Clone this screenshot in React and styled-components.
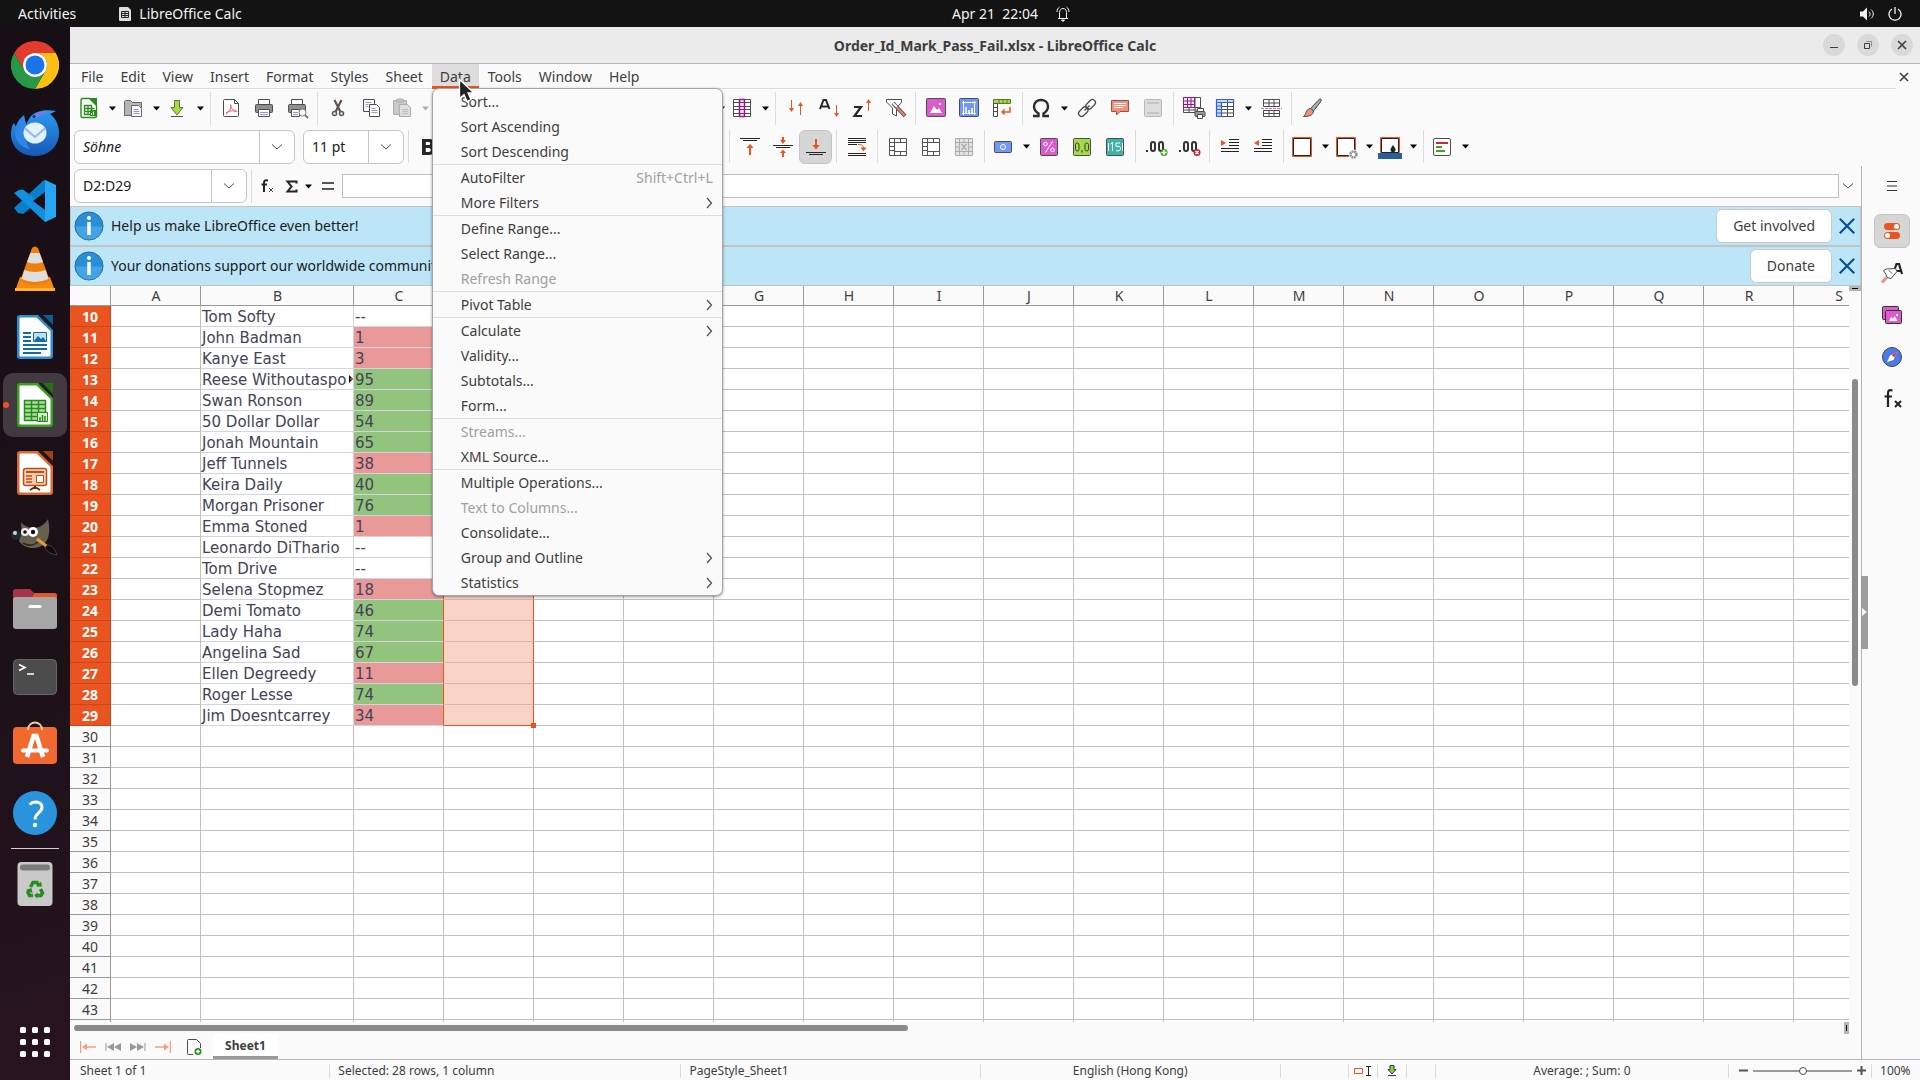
import React from "react";
import styled, { createGlobalStyle, css } from "styled-components";
import {
  AlignCenter,
  AlignLeft,
  AlignRight,
  Eraser,
  Highlighter,
  Italic,
  Paintbrush,
  Redo2,
  Rows3,
  Search,
  SpellCheck,
  Type,
  Underline,
  Undo2
} from "lucide-react";

const color = {
  panel: "#fafafa",
  text: "#3d3d3d",
  muted: "#a0a0a0",
  line: "#c0c0c0",
  softLine: "#dcdcdc",
  headLine: "#999999",
  orange: "#e95420",
  info: "#bce5f7",
  ink: "#4d4d4d"
};

const GlobalStyle = createGlobalStyle`
  * {
    box-sizing: border-box;
  }

  body {
    margin: 0;
    overflow: hidden;
    background: #1a0f16;
    color: ${color.text};
    font-family: "Noto Sans", "Open Sans", sans-serif;
    font-size: 14px;
    line-height: 20px;
  }

  button,
  input {
    margin: 0;
    padding: 0;
    border: 0;
    background: none;
    color: inherit;
    font: inherit;
  }

  svg {
    display: block;
    flex: none;
  }
`;

/* ---------- shell ---------- */

const Screen = styled.div`
  display: flex;
  flex-direction: column;
  height: 100vh;
`;

const TopBar = styled.header`
  display: grid;
  grid-template-columns: 1fr auto 1fr;
  flex: none;
  align-items: center;
  height: 27px;
  padding: 0 18px;
  background: #131313;
  color: #f2f2f2;
`;

const TopGroup = styled.div`
  display: flex;
  align-items: center;
  justify-content: ${props => props.$align || "flex-start"};
  gap: ${props => props.$gap}px;
  white-space: pre;
`;

const Clock = styled(TopGroup)`
  padding-left: 102px;
`;

const AppName = styled.div`
  display: flex;
  align-items: center;
  gap: 8px;
`;

const Body = styled.div`
  display: flex;
  flex: 1;
  min-height: 0;
`;

const Dock = styled.nav`
  display: flex;
  flex: none;
  flex-direction: column;
  align-items: center;
  gap: 4px;
  width: 70px;
  padding: 6px 0;
  background: linear-gradient(160deg, #180e15, #1d1118 60%, #28141f);
`;

const DockButton = styled.button`
  position: relative;
  display: flex;
  flex: none;
  align-items: center;
  justify-content: center;
  width: 64px;
  height: 64px;
  border-radius: 10px;
  background: ${props => (props.$active ? "#423a40" : "transparent")};

  ${props =>
    props.$active &&
    css`
      &::before {
        content: "";
        position: absolute;
        left: 0;
        width: 6px;
        height: 6px;
        border-radius: 3px;
        background: ${color.orange};
      }
    `}
`;

const DockRule = styled.hr`
  width: 48px;
  height: 1px;
  margin: -1px 0;
  border: 0;
  background: #d4cfd2;
`;

const DockSpacer = styled.div`
  flex: 1;
`;

const Window = styled.main`
  display: flex;
  flex: 1;
  flex-direction: column;
  min-width: 0;
  background: ${color.panel};
`;

const TitleBar = styled.div`
  display: grid;
  grid-template-columns: 1fr auto 1fr;
  flex: none;
  align-items: center;
  height: 37px;
  padding: 0 7px;
  border-bottom: 1px solid #b8b8b8;
  background: #ebebeb;
`;

const Title = styled.h1`
  grid-column: 2;
  margin: 0;
  padding-top: 1px;
  font-size: 14px;
  font-weight: 700;
`;

const WindowControls = styled.div`
  display: flex;
  justify-content: flex-end;
  gap: 12px;
`;

const RoundButton = styled.button`
  display: flex;
  align-items: center;
  justify-content: center;
  width: 22px;
  height: 22px;
  border-radius: 11px;
  background: #d9d9d9;
`;

/* ---------- menu bar ---------- */

const MenuBar = styled.div`
  display: flex;
  flex: none;
  height: 25px;
`;

const MenuList = styled.div`
  display: flex;
  flex: 1;
  gap: 1px;
  padding-left: 3px;
  border-bottom: 1px solid ${color.softLine};
`;

const MenuSlot = styled.div`
  position: relative;
`;

const MenuTitle = styled.button`
  height: 25px;
  padding: 0 8px;
  line-height: 25px;
  ${props =>
    props.$open &&
    css`
      background: #dcdcdc;
      box-shadow: inset 0 -3px ${color.orange};
    `}
`;

const CloseDocument = styled.button`
  display: flex;
  align-items: center;
  justify-content: center;
  width: 24px;
  padding-right: 8px;
`;

const Popup = styled.div`
  position: absolute;
  z-index: 10;
  top: 24px;
  left: 0;
  width: 291px;
  border: 1px solid #a6a6a6;
  border-radius: 7px;
  background: ${color.panel};
  box-shadow: 0 1px 3px rgba(0, 0, 0, 0.4);
`;

const MenuGroup = styled.div`
  & + & {
    border-top: 1px solid ${color.softLine};
  }
`;

const MenuEntry = styled.button`
  display: flex;
  align-items: center;
  justify-content: space-between;
  width: 100%;
  height: 25px;
  padding: 0 9px 0 28px;
  color: ${props => (props.disabled ? color.muted : color.text)};
`;

const Shortcut = styled.span`
  color: ${color.muted};
`;

const Pointer = styled.svg`
  position: absolute;
  z-index: 20;
  top: 14px;
  left: 26px;
`;

/* ---------- toolbars ---------- */

const Toolbar = styled.div`
  display: flex;
  flex: none;
  align-items: center;
  height: ${props => props.$height}px;
  padding: 0 4px;
`;

const ToolButton = styled.button`
  display: flex;
  flex: none;
  align-items: center;
  justify-content: flex-start;
  width: 33px;
  height: 34px;
  padding-left: ${props => (props.$dropdown ? 2 : 4)}px;
  border: 1px solid ${props => (props.$pressed ? "#c4c4c4" : "transparent")};
  border-radius: 6px;
  background: ${props => (props.$pressed ? "#d6d6d6" : "transparent")};
`;

const CaretButton = styled.button`
  display: flex;
  flex: none;
  align-items: center;
  justify-content: center;
  width: 11px;
  height: 34px;
`;

const Rule = styled.span`
  flex: none;
  width: 1px;
  height: 33px;
  margin: 0 3px 0 4px;
  background: ${color.softLine};
`;

const Combo = styled.div`
  display: flex;
  flex: none;
  width: ${props => props.$width}px;
  height: 34px;
  margin-right: ${props => props.$after || 0}px;
  border: 1px solid #c6c6c6;
  border-radius: 6px;
  background: #ffffff;
  color: #1a1a1a;

  input {
    flex: 1;
    min-width: 0;
    padding-left: 8px;
    font-style: ${props => (props.$italic ? "italic" : "normal")};
    outline: none;
  }

  button {
    display: flex;
    align-items: center;
    justify-content: center;
    width: 35px;
    border-left: 1px solid #c6c6c6;
  }
`;

const FormulaButton = styled.button`
  display: flex;
  flex: none;
  align-items: center;
  justify-content: center;
  width: ${props => props.$width || 24}px;
  height: 24px;
`;

const FormulaInput = styled.input`
  flex: 1;
  min-width: 0;
  height: 24px;
  border: 1px solid ${color.line};
  background: #ffffff;
`;

/* ---------- work area ---------- */

const Workspace = styled.div`
  display: flex;
  flex: 1;
  min-height: 0;
`;

const Document = styled.section`
  display: flex;
  flex: 1;
  flex-direction: column;
  min-width: 0;
`;

const InfoBar = styled.div`
  display: flex;
  flex: none;
  align-items: center;
  height: 40px;
  padding-left: 3px;
  border: 1px solid #c3c3c3;
  background: ${color.info};
  color: #1a1a1a;
`;

const InfoText = styled.span`
  flex: 1;
  padding-left: 7px;
`;

const InfoButton = styled.button`
  height: 34px;
  padding: 0 16px;
  border: 1px solid #c9c9c9;
  border-radius: 6px;
  background: #ffffff;
  color: ${color.text};
`;

const InfoClose = styled.button`
  display: flex;
  align-items: center;
  justify-content: center;
  width: 28px;
  height: 34px;
  padding-left: 2px;
`;

const GridArea = styled.div`
  display: flex;
  flex: 1;
  min-height: 0;
`;

const SheetView = styled.div`
  flex: 1;
  min-width: 0;
  overflow: hidden;
  background: #ffffff;
`;

const Sheet = styled.table`
  width: 1px;
  table-layout: fixed;
  border-spacing: 0;
`;

const HeadCell = styled.th`
  height: ${props => (props.$top ? 20 : 21)}px;
  padding: 0 0 0 ${props => (props.$top ? 1 : 0)}px;
  border-right: 1px solid ${props => (props.$selected ? "#c9481b" : color.headLine)};
  border-bottom: 1px solid ${props => (props.$selected ? "#c9481b" : color.headLine)};
  background: ${props => (props.$selected ? color.orange : color.panel)};
  color: ${props => (props.$selected ? "#ffffff" : color.text)};
  font-weight: ${props => (props.$selected ? 700 : 400)};
  line-height: 19px;
  text-align: center;
`;

const fills = { fail: "#ea9999", pass: "#93c47d" };

const Cell = styled.td`
  position: relative;
  height: 21px;
  padding: 2px 0 0 1px;
  border-right: 1px solid ${props => (props.$styled ? "#d3d3e1" : color.line)};
  border-bottom: 1px solid ${props => (props.$styled ? "#d3d3e1" : color.line)};
  background: ${props => fills[props.$fill] || "transparent"};
  color: #434356;
  font-family: "DejaVu Sans", sans-serif;
  font-size: 15px;
  line-height: 18px;
  white-space: nowrap;

  ${props =>
    props.$beforeSelection &&
    css`
      border-right-color: ${color.orange};
    `}

  ${props =>
    props.$selected &&
    css`
      border-right-color: ${color.orange};
      border-bottom-color: ${props.$last ? color.orange : "#dbb4ac"};
      background: #fad3c7;
    `}
`;

const FillHandle = styled.span`
  position: absolute;
  right: -3px;
  bottom: -3px;
  z-index: 1;
  width: 5px;
  height: 5px;
  background: ${color.orange};
`;

const OverflowMark = styled.svg`
  position: absolute;
  top: 6px;
  right: 0;
`;

const VerticalTrack = styled.div`
  display: flex;
  flex: none;
  flex-direction: column;
  align-items: center;
  width: 12px;
`;

const SplitHandle = styled.div`
  display: flex;
  align-items: center;
  justify-content: center;
  flex: none;
  width: ${props => (props.$vertical ? 5 : 12)}px;
  height: ${props => (props.$vertical ? 12 : 5)}px;
  background: #b5b5b5;

  &::before {
    content: "";
    width: ${props => (props.$vertical ? 1 : 6)}px;
    height: ${props => (props.$vertical ? 6 : 1)}px;
    background: #000000;
  }
`;

const VerticalRun = styled.div`
  display: grid;
  grid-template-rows: 88fr 307fr 336fr;
  flex: 1;
`;

const Thumb = styled.div`
  grid-area: 2 / 1;
  width: 6px;
  border-radius: 3px;
  background: #8a8a8a;
`;

const HorizontalTrack = styled.div`
  display: flex;
  flex: none;
  align-items: center;
  justify-content: space-between;
  height: 12px;
  padding: 0 12px 0 4px;
`;

const HorizontalThumb = styled.div`
  width: 47%;
  height: 6px;
  border-radius: 3px;
  background: #8a8a8a;
`;

const TabBar = styled.div`
  display: flex;
  flex: none;
  align-items: stretch;
  height: 25px;
  padding-left: 5px;
`;

const TabNav = styled.button`
  display: flex;
  align-items: center;
  justify-content: center;
  width: 25px;
`;

const NewSheet = styled(TabNav)`
  width: 38px;
`;

const SheetTab = styled.button`
  width: 65px;
  padding-top: 1px;
  border-bottom: 3px solid #999999;
  background: #ffffff;
  font-size: 12px;
  font-weight: 700;
  line-height: 20px;
`;

const Sidebar = styled.aside`
  position: relative;
  display: flex;
  flex: none;
  flex-direction: column;
  align-items: center;
  gap: 8px;
  width: 59px;
  padding: 3px 0 0 2px;
  border-left: 1px solid #b5b5b5;
`;

const SideButton = styled.button`
  display: flex;
  flex: none;
  align-items: center;
  justify-content: center;
  width: 36px;
  height: 34px;
  border: 1px solid ${props => (props.$active ? "#c4c4c4" : "transparent")};
  border-radius: 6px;
  background: ${props => (props.$active ? "#d6d6d6" : "transparent")};

  &:first-child {
    margin-bottom: 3px;
  }
`;

const SideGrip = styled.button`
  position: absolute;
  top: 50%;
  left: -1px;
  display: flex;
  align-items: center;
  justify-content: center;
  width: 7px;
  height: 73px;
  margin-top: -37px;
  background: #9b9b9b;
`;

const StatusBar = styled.footer`
  display: flex;
  flex: none;
  align-items: center;
  height: 21px;
  padding-top: 1px;
  border-top: 1px solid #b5b5b5;
  font-size: 12px;
`;

const StatusCell = styled.div`
  display: flex;
  flex: ${props => (props.$fixed ? `0 0 ${props.$size}px` : `${props.$size} 1 0`)};
  align-items: center;
  justify-content: ${props => (props.$center ? "center" : "flex-start")};
  min-width: 0;
  height: 14px;
  padding-left: ${props => props.$pad || 0}px;
  border-right: ${props => (props.$end ? "0" : `1px solid ${color.softLine}`)};
  white-space: nowrap;
`;

const ZoomButton = styled.button`
  display: flex;
  flex: none;
  align-items: center;
  justify-content: center;
  width: 19px;
`;

const ZoomSlider = styled.input`
  flex: 1;
  min-width: 0;
  height: 14px;
  appearance: none;

  &::-webkit-slider-runnable-track {
    height: 2px;
    background: #9b9b9b;
  }

  &::-webkit-slider-thumb {
    width: 8px;
    height: 8px;
    margin-top: -3px;
    border: 1px solid #4d4d4d;
    border-radius: 4px;
    background: #ffffff;
    appearance: none;
  }
`;

/* ---------- icons ---------- */

const Glyph = ({ size = 24, box = 24, children }) => (
  <svg width={size} height={size} viewBox={`0 0 ${box} ${box}`} fill="none" aria-hidden="true">
    {children}
  </svg>
);

const Caret = ({ muted }) => (
  <svg width="7" height="5" viewBox="0 0 7 5" aria-hidden="true">
    <path d="M0 .5h7L3.5 4.5z" fill={muted ? "#b0b0b0" : "#000"} />
  </svg>
);

const Chevron = () => (
  <svg width="12" height="8" viewBox="0 0 12 8" fill="none" aria-hidden="true">
    <path d="M1 1.5l5 4.5 5-4.5" stroke="#4d4d4d" />
  </svg>
);

const SubmenuArrow = () => (
  <svg width="8" height="12" viewBox="0 0 8 12" fill="none" aria-hidden="true">
    <path d="M2 1l4.5 5L2 11" stroke="#4d4d4d" strokeWidth="1.2" />
  </svg>
);

const Cross = ({ size = 10, stroke = "#3d3d3d", width = 1.6 }) => (
  <svg width={size} height={size} viewBox="0 0 10 10" fill="none" aria-hidden="true">
    <path d="M1 1l8 8M9 1l-8 8" stroke={stroke} strokeWidth={width} />
  </svg>
);

const icons = {
  newSheet: (
    <>
      <path d="M5.5 2.5h7l7 7V20a1.5 1.5 0 0 1-1.5 1.5H5.5A1.5 1.5 0 0 1 4 20V4a1.5 1.5 0 0 1 1.5-1.5z" fill="#fff" stroke="#2a8a1c" strokeWidth="1.4" />
      <path d="M12 2h8v8z" fill="#2a8a1c" />
      <path d="M7.5 9.5h7v9h-7zM7.5 12.5h10M7.5 15.5h10M11 9.5v9M14.5 12v6" stroke="#2a8a1c" strokeWidth="1.3" />
      <path d="M13 14h6v6h-6z" fill="#2a8a1c" />
      <path d="M14.5 19v-2M16.5 19v-3.5" stroke="#fff" />
    </>
  ),
  open: (
    <>
      <path d="M3.5 19.5v-14l1-1h5l2 2h9v13z" fill="#b4b4b4" stroke="#696969" />
      <path d="M10.5 9.5h7l3 3v8h-10z" fill="#fafafa" stroke="#696969" />
      <path d="M12.5 13.5h5M12.5 15.5h6M12.5 17.5h6" stroke="#8d95f2" />
    </>
  ),
  save: (
    <>
      <path d="M9.5 4.5h5v7H18L12 19l-6-7.5h3.5z" fill="#a5d94c" stroke="#5d7a2c" />
      <path d="M6 20.5h12" stroke="#4d4d4d" />
    </>
  ),
  pdf: (
    <>
      <path d="M5.5 3.5h10l4 4v12a1 1 0 0 1-1 1h-13a1 1 0 0 1-1-1v-15a1 1 0 0 1 1-1z" fill="#fff" stroke={color.ink} />
      <path d="M15.5 3.5v4h4" stroke={color.ink} />
      <path d="M7 18c4-2.5 5.5-7 4.5-9.5M11.5 9c.5 4 3 6 6.5 6.5M7 17c3-2.5 7-2.5 11-1.5" stroke="#ed5a72" />
    </>
  ),
  print: (
    <>
      <path d="M6.5 8V3.5h11V8" fill="#fff" stroke={color.ink} />
      <rect x="3.5" y="8.5" width="17" height="8" rx="1" fill="#8f8f8f" stroke={color.ink} />
      <path d="M6.5 13.5h11v7h-11z" fill="#fff" stroke={color.ink} />
      <path d="M8 16.5h8M8 18.5h8" stroke="#8d95f2" />
    </>
  ),
  preview: (
    <>
      <path d="M6.5 8V3.5h11V8" fill="#fff" stroke={color.ink} />
      <rect x="3.5" y="8.5" width="17" height="8" rx="1" fill="#8f8f8f" stroke={color.ink} />
      <path d="M6.5 13.5h8v7h-8z" fill="#fff" stroke={color.ink} />
      <path d="M8 16.5h5M8 18.5h5" stroke="#8d95f2" />
      <circle cx="17.5" cy="16.5" r="3.5" fill="#fff" stroke="#777" />
      <path d="M20 19l3 3" stroke="#777" strokeWidth="2" />
    </>
  ),
  cut: (
    <>
      <path d="M8.5 4l6 12M15.5 4l-6 12" stroke="#5b564e" strokeWidth="2.2" />
      <circle cx="8.5" cy="17.5" r="2" fill="#fafafa" stroke="#5b564e" strokeWidth="1.5" />
      <circle cx="15.5" cy="17.5" r="2" fill="#fafafa" stroke="#5b564e" strokeWidth="1.5" />
    </>
  ),
  copy: (
    <>
      <path d="M4.5 3.5h11v12h-11z" fill="#fff" stroke={color.ink} />
      <path d="M6.5 6.5h6M6.5 8.5h3M6.5 10.5h3" stroke="#8d95f2" />
      <path d="M10.5 8.5h7l3 3v9h-10z" fill="#fff" stroke={color.ink} />
      <path d="M12.5 12.5h4M12.5 14.5h6M12.5 16.5h6" stroke="#8d95f2" />
    </>
  ),
  paste: (
    <>
      <path d="M3.5 4.5h13v14h-13z" fill="#c9c9c9" stroke="#adadad" />
      <path d="M7 3h6v3H7z" fill="#c9c9c9" stroke="#adadad" />
      <path d="M9.5 8.5h8l3 3v9h-11z" fill="#dedede" stroke="#adadad" />
      <path d="M12 13.5h6M12 15.5h6M12 17.5h6" stroke="#bdbdbd" />
    </>
  ),
  column: (
    <>
      <path d="M3.5 3.5h17v17h-17zM3.5 6.5h17M3.5 10.5h17M3.5 13.5h17M3.5 17.5h17" fill="#fff" stroke={color.ink} />
      <path d="M9.5 3.5h5v17h-5z" fill="#fce5fb" stroke="#8a1d84" strokeWidth="1.5" />
      <path d="M9.5 6.5h5M9.5 10.5h5M9.5 13.5h5M9.5 17.5h5" stroke="#8a1d84" />
    </>
  ),
  sort: (
    <>
      <path d="M7.5 4v9M16.5 9v10" stroke={color.orange} />
      <path d="M5 12h5l-2.5 4zM14 10h5l-2.5-4z" fill={color.orange} />
    </>
  ),
  sortAsc: (
    <>
      <path d="M3 13L6.5 4H9l3.5 9M4.5 10.5H11" stroke="#262626" strokeWidth="2" />
      <path d="M19.5 9v9" stroke={color.orange} />
      <path d="M17 17h5l-2.5 4z" fill={color.orange} />
    </>
  ),
  sortDesc: (
    <>
      <path d="M4 11h7l-6.5 9H12" stroke="#262626" strokeWidth="2.2" />
      <path d="M18.5 6v9" stroke={color.orange} />
      <path d="M16 7h5l-2.5-4z" fill={color.orange} />
    </>
  ),
  filter: (
    <>
      <path d="M3.5 3.5h15v3l-5 5.5v8l-4-2v-6l-6-6z" fill="#fff" stroke={color.ink} />
      <path d="M10 7l12 13" stroke={color.ink} strokeWidth="4" />
      <path d="M10 7l4 4" stroke="#fff" strokeWidth="2" />
      <path d="M14 11.5l7.5 8" stroke="#ed7c68" strokeWidth="2.4" />
    </>
  ),
  image: (
    <>
      <rect x="2.5" y="2.5" width="19" height="18" rx="1" fill="#dd5ccd" stroke={color.ink} />
      <path d="M6 17l4-7 3 4 2-2 3 5z" fill="#fff" />
      <path d="M15 7h2v2h-2z" fill="#fff" />
    </>
  ),
  chart: (
    <>
      <rect x="2.5" y="2.5" width="19" height="18" rx="1" fill="#7198f8" stroke={color.ink} />
      <path d="M5 6.5h14M5 17.5h14M6.5 5v14M17.5 5v14" stroke="#fff" />
      <path d="M9 17v-6M12 17v-3M15 17v-5" stroke="#fff" strokeWidth="1.6" />
    </>
  ),
  pivot: (
    <>
      <path d="M3.5 3.5h17v4h-17zM9 3.5v4M13 3.5v4M17 3.5v4" fill="#a5d94c" stroke="#5d7a2c" />
      <path d="M3.5 7.5h4v13h-4zM3.5 11.5h4M3.5 15.5h4" fill="#fff" stroke={color.ink} />
      <path d="M20 11v5h-7" stroke={color.orange} strokeWidth="1.5" />
      <path d="M14.5 12.5v7L11 16z" fill={color.orange} />
    </>
  ),
  omega: (
    <path d="M4 20h5.5v-2.5C6.5 15.5 5 13 5 10.5 5 6.5 8 4 12 4s7 2.5 7 6.5c0 2.5-1.5 5-4.5 7V20H20" stroke="#2b2b2b" strokeWidth="2.4" />
  ),
  link: (
    <>
      <rect x="10" y="5" width="11" height="6" rx="3" transform="rotate(-45 16 8)" stroke={color.ink} strokeWidth="1.3" />
      <rect x="3" y="13" width="11" height="6" rx="3" transform="rotate(-45 8 16)" stroke={color.ink} strokeWidth="1.3" />
      <path d="M9.5 14.5l5-5" stroke={color.ink} strokeWidth="1.3" />
    </>
  ),
  comment: (
    <>
      <path d="M3.5 4.5h17v11H12L8.5 19v-3.5h-5z" fill="#f48f7d" stroke="#9b5145" />
      <path d="M6 7.5h12M6 9.5h12M6 11.5h9" stroke="#fff" />
    </>
  ),
  header: (
    <>
      <rect x="3.5" y="3.5" width="17" height="17" rx="1" fill="#dcdcdc" stroke="#b8b8b8" />
      <path d="M6 7h12M6 17h12" stroke="#bfbfbf" strokeWidth="1.5" />
    </>
  ),
  printArea: (
    <>
      <path d="M1.5 1.5h17v15h-17zM1.5 11.5h17M1.5 14h17M7 11v6M13 1.5v15" fill="#fff" stroke={color.ink} />
      <path d="M1.5 1.5h11v10h-11zM1.5 5h11M1.5 8.5h11M5.5 1.5v10M9 1.5v10" fill="#fce5fb" stroke="#8a1d84" />
      <path d="M15.5 16v-3.5h6V16" fill="#fff" stroke={color.ink} />
      <rect x="13" y="15.5" width="10" height="5" rx="1" fill="#999" stroke={color.ink} />
      <path d="M15.5 18.5h5v4h-5z" fill="#fff" stroke={color.ink} />
    </>
  ),
  freeze: (
    <>
      <path d="M3.5 3.5h17v17h-17zM3.5 10.5h17M3.5 13.5h17M3.5 17h17M14.5 3.5v17" fill="#fff" stroke={color.ink} />
      <path d="M3.5 3.5h17v3h-17zM3.5 6.5h5v14h-5z" fill="#c8dafc" stroke="#2f62d9" strokeWidth="1.2" />
      <path d="M3.5 10h5M3.5 13.5h5M3.5 17h5M14.5 3.5v3" stroke="#2f62d9" />
    </>
  ),
  split: (
    <>
      <path d="M4.5 3.5h16v7h-16zM4.5 7h16M10 3.5v7M15 3.5v7M4.5 14.5h16v6h-16zM4.5 17.5h16M10 14.5v6M15 14.5v6" fill="#fff" stroke={color.ink} />
      <path d="M2 12.5h21" stroke="#e964c8" strokeDasharray="3 1" />
    </>
  ),
  brush: (
    <>
      <path d="M20.5 3c1 0 1 1.5 0 3l-7 9-3-2.5L18 4.5c1-1 2-1.5 2.5-1.5z" fill="#a8a8a8" stroke={color.ink} />
      <path d="M10.5 12.5l3 2.5c0 3-2.5 5.5-10 5.5 3-2 2-7.5 7-8z" fill="#f48f7d" stroke={color.ink} />
    </>
  ),
  bold: (
    <path
      d="M5 4h7.5c3 0 4.5 1.5 4.5 4 0 1.8-1 3-2.5 3.4 2 .4 3 1.8 3 3.7 0 3-2 4.9-5 4.9H5zm3.8 3v3h2.7c1.2 0 1.7-.5 1.7-1.5S12.7 7 11.5 7zm0 6v4h3c1.3 0 2-.8 2-2s-.7-2-2-2z"
      fill="#262626"
    />
  ),
  alignTop: (
    <>
      <path d="M2 3.5h20M5 5.5h14" stroke="#222" />
      <path d="M12 11v9" stroke={color.orange} strokeWidth="2" />
      <path d="M8.5 13h7L12 9z" fill={color.orange} />
    </>
  ),
  alignMiddle: (
    <>
      <path d="M2 10.5h20M5 12.5h14" stroke="#222" />
      <path d="M12 2v4M12 22v-5" stroke={color.orange} strokeWidth="2" />
      <path d="M9 5h6l-3 4zM9 18h6l-3-3.5z" fill={color.orange} />
    </>
  ),
  alignBottom: (
    <>
      <path d="M2 17.5h20M5 19.5h14" stroke="#222" />
      <path d="M12 4v7" stroke={color.orange} strokeWidth="2" />
      <path d="M8.5 10h7L12 14.5z" fill={color.orange} />
    </>
  ),
  wrap: (
    <>
      <path d="M3 3.5h18M3 5.5h18M3 7.5h18M3 9.5h9M3 18.5h18M3 20.5h18" stroke="#222" />
      <path d="M13 9.5c3 0 5.5.5 5.5 4" stroke={color.orange} />
      <path d="M15.5 12.5h6l-3 4z" fill={color.orange} />
    </>
  ),
  merge: (
    <>
      <path d="M3.5 3.5h17v17h-17zM3.5 7.5h5M3.5 11.5h5M3.5 15.5h5M8.5 3.5v17M14.5 3.5v4M14.5 16.5v4" fill="#fff" stroke="#555" />
      <path d="M8.5 7.5h12v9h-12z" fill="#fff" stroke="#555" />
    </>
  ),
  unmerge: (
    <>
      <path d="M3.5 3.5h17v17h-17zM3.5 7.5h17M3.5 16.5h17M7.5 3.5v17M16.5 3.5v17M12 3.5v4M12 16.5v4M3.5 12h4M16.5 12h4" fill="#e3e3e3" stroke="#adadad" />
      <path d="M9.5 9l5 6M14.5 9l-5 6" stroke="#adadad" strokeWidth="1.5" />
    </>
  ),
  currency: (
    <>
      <rect x="3.5" y="6.5" width="17" height="11" rx="1" fill="#7198f8" stroke={color.ink} />
      <circle cx="12" cy="12" r="2.5" stroke="#fff" />
    </>
  ),
  percent: (
    <>
      <rect x="3.5" y="3.5" width="17" height="17" rx="1" fill="#dd5ccd" stroke={color.ink} />
      <circle cx="8.5" cy="9" r="1.8" stroke="#fff" />
      <circle cx="15.5" cy="15" r="1.8" stroke="#fff" />
      <path d="M15.5 6.5l-7 11" stroke="#fff" />
    </>
  ),
  number: (
    <>
      <rect x="3.5" y="3.5" width="17" height="17" rx="1" fill="#a5d94c" stroke={color.ink} />
      <rect x="5.5" y="8" width="3.5" height="8" rx="1.7" stroke="#3d3d3d" />
      <rect x="15" y="8" width="3.5" height="8" rx="1.7" stroke="#3d3d3d" />
      <path d="M12 15v2.5" stroke="#3d3d3d" />
    </>
  ),
  date: (
    <>
      <rect x="3.5" y="3.5" width="17" height="17" rx="1" fill="#3fb5aa" stroke={color.ink} />
      <path d="M5.5 8v8M7.5 9l2-1.5V16M17 8h-4v3.5c3-.8 4.5 0 4.5 2s-2 3-4.5 2M19.5 8v8" stroke="#fff" />
    </>
  ),
  addDecimal: (
    <>
      <path d="M2 15h2v2H2z" fill="#333" />
      <rect x="7" y="7" width="4" height="9" rx="2" stroke="#333" strokeWidth="2" />
      <rect x="15" y="7" width="4" height="9" rx="2" stroke="#333" strokeWidth="2" />
      <circle cx="20" cy="17.5" r="3.5" fill="#43a51e" />
      <path d="M17.5 17.5h5M20 15v5" stroke="#fff" strokeWidth="1.4" />
    </>
  ),
  removeDecimal: (
    <>
      <path d="M2 15h2v2H2z" fill="#333" />
      <rect x="7" y="7" width="4" height="9" rx="2" stroke="#333" strokeWidth="2" />
      <rect x="15" y="7" width="4" height="9" rx="2" stroke="#333" strokeWidth="2" />
      <circle cx="20" cy="17.5" r="3.5" fill="#cf2138" />
      <path d="M18.5 16l3 3M21.5 16l-3 3" stroke="#fff" strokeWidth="1.4" />
    </>
  ),
  indent: (
    <>
      <path d="M11 4.5h10M11 7.5h10M11 10.5h10M3 13.5h18M3 16.5h18" stroke="#222" />
      <path d="M3 5v6l5-3z" fill={color.orange} />
    </>
  ),
  outdent: (
    <>
      <path d="M11 4.5h10M11 7.5h10M11 10.5h10M3 13.5h18M3 16.5h18" stroke="#222" />
      <path d="M8 5v6L3 8z" fill={color.orange} />
    </>
  ),
  border: (
    <>
      <path d="M2.5 2.5h19v19h-19z" fill="#fff" stroke={color.orange} />
      <path d="M3.5 3.5h17v17h-17z" stroke="#222" />
    </>
  ),
  borderStyle: (
    <>
      <path d="M2.5 2.5h19v19h-19z" fill="#fff" stroke={color.orange} />
      <path d="M3.5 3.5h17v17h-17z" stroke="#222" />
      <circle cx="19.5" cy="19.5" r="5" fill="#fafafa" />
      <circle cx="19.5" cy="19.5" r="3" fill="#fff" stroke="#909090" strokeWidth="2.5" strokeDasharray="1.8 .6" />
    </>
  ),
  background: (
    <>
      <path d="M2.5 17.5v-15h19v15z" fill="#fff" stroke={color.orange} />
      <path d="M3.5 17.5v-14h17v14z" stroke="#222" />
      <path d="M15 10c1.5 2 2.5 3.5 2.5 5 0 3-5 3-5 0 0-1.5 1-3 2.5-5z" fill="#222" />
      <path d="M0 18h24v6H0z" fill="#2a6099" />
    </>
  ),
  conditional: (
    <>
      <rect x="3.5" y="3.5" width="17" height="17" rx="1.5" fill="#fff" stroke={color.ink} />
      <path d="M6 8h12" stroke="#cf2138" strokeWidth="2" />
      <path d="M6 12h6M6 16h9" stroke="#43a51e" strokeWidth="2" />
    </>
  )
};

/* ---------- dock artwork ---------- */

const Big = ({ children }) => (
  <Glyph size={48} box={48}>
    {children}
  </Glyph>
);

const OfficeDoc = ({ main, dark, children }) => (
  <Big>
    <path d="M9 2h18l15 15v26a3 3 0 0 1-3 3H9a3 3 0 0 1-3-3V5a3 3 0 0 1 3-3z" fill={main} />
    <path d="M9.5 4.5h16L39.5 18v24.5a1 1 0 0 1-1 1h-29a1 1 0 0 1-1-1v-37a1 1 0 0 1 1-1z" fill="#fff" />
    <path d="M32 2h10v10z" fill={dark} />
    <path d="M28 3l14 14V14L31 2h-3z" fill="#241b20" />
    {children}
  </Big>
);

const dockArt = {
  Chrome: (
    <Big>
      <path d="M24 12H44.8A24 24 0 0 0 3.2 12L13.6 30A12 12 0 0 1 24 12z" fill="#e33b2e" />
      <path d="M44.8 12H24A12 12 0 0 1 34.4 30L24 48A24 24 0 0 0 44.8 12z" fill="#fcc015" />
      <path d="M3.2 12L13.6 30A12 12 0 0 0 34.4 30L24 48A24 24 0 0 1 3.2 12z" fill="#279847" />
      <circle cx="24" cy="24" r="12" fill="#fff" />
      <circle cx="24" cy="24" r="9.5" fill="#1a73e8" />
    </Big>
  ),
  Thunderbird: (
    <Big>
      <defs>
        <linearGradient id="bird" x1="0" y1="0" x2="0" y2="1">
          <stop offset="0" stopColor="#2a9bf2" />
          <stop offset="1" stopColor="#1659b5" />
        </linearGradient>
      </defs>
      <path d="M18 10C22 2 34 0 45 2l-6 3c6 4 9 12 9 19 0 13-10 23-24 23S0 38 0 25c0-5 1-9 3-11l2 4c1-5 4-9 8-12 1 5 1 9 0 13z" fill="url(#bird)" />
      <path d="M20 10C24 4 32 2 40 2c-6 2-9 4-12 6z" fill="#7f75e8" />
      <path d="M5 18c-3 10 2 20 14 22-5-6-6-14-3-22l-3-11c-4 3-7 6-8 11z" fill="#2e86e6" />
      <circle cx="23" cy="7.5" r="1.5" fill="#0d3a78" />
      <ellipse cx="24" cy="24" rx="11.5" ry="10.5" fill="#e3f0fd" />
      <path d="M13.5 19L24 28l10.5-9" stroke="#8fb9e6" strokeWidth="2" />
    </Big>
  ),
  "Visual Studio Code": (
    <Big>
      <path d="M33 3L3 31l4 5 5 1L45 11z" fill="#0b7fcb" />
      <path d="M3 16l5-3 4-.5L45 38 34 45z" fill="#1190df" />
      <path d="M34 3l11 5v32l-11 5z" fill="#27a6f3" />
      <path d="M34 15v18L22 24z" fill="#1a0f16" />
    </Big>
  ),
  VLC: (
    <Big>
      <path d="M9 32h30l5 14H4z" fill="#f68b12" />
      <path d="M4 43h40v3H4z" fill="#ffb32c" />
      <path d="M21 3q3-3 6 0l12 33q-15 8-30 0z" fill="#f07f0d" />
      <path d="M19.5 8h9l3.5 9q-8 3-16 0z" fill="#dedede" />
      <path d="M13.5 25q10.5 4 21 0l3 9q-13.5 6-27 0z" fill="#dedede" />
    </Big>
  ),
  Writer: (
    <OfficeDoc main="#2a8fd0" dark="#0d5c96">
      <path d="M12 20h8M12 24h8M12 28h8M12 32h24M12 36h24M12 40h18" stroke="#0f6cad" strokeWidth="2" />
      <path d="M22.5 19.5h13v9h-13z" fill="#bde0f7" stroke="#0f6cad" />
      <path d="M23 28l4-5 3 3 2-2 3 4z" fill="#0f6cad" />
    </OfficeDoc>
  ),
  Calc: (
    <OfficeDoc main="#37a21d" dark="#217410">
      <path d="M13.5 19.5h21v20h-21z" fill="#a7df98" />
      <path d="M13.5 19.5h21v20h-21zM13.5 23.5h21M13.5 27.5h21M13.5 31.5h21M13.5 35.5h21M20.5 19.5v20M27.5 19.5v20" stroke="#2a8a1c" strokeWidth="1.5" />
      <path d="M26.5 31.5h10v9h-10z" fill="#d5f2cd" stroke="#2a8a1c" />
      <path d="M29 40v-4M31.5 40v-6M34 40v-5" stroke="#2a8a1c" strokeWidth="1.5" />
    </OfficeDoc>
  ),
  Impress: (
    <OfficeDoc main="#dc6a2c" dark="#a34310">
      <rect x="12.5" y="19.5" width="23" height="17" rx="2" fill="#f9c9a9" stroke="#b5511c" strokeWidth="1.5" />
      <path d="M15 23h18" stroke="#b5511c" strokeWidth="2" />
      <path d="M15 27h6M15 30h6M15 33h6" stroke="#b5511c" strokeWidth="1.5" />
      <path d="M25.5 26.5h7v7h-7z" fill="#fff" stroke="#b5511c" />
      <path d="M24 37v3M24 38l-5 3M24 38l5 3" stroke="#5d2a0c" strokeWidth="2" />
    </OfficeDoc>
  ),
  GIMP: (
    <Big>
      <path d="M10 5c3 4 8 6 14 6 6-1 10-4 13-9 2 10 2 18-3 24-6 7-20 7-26-2 2-6 3-12 2-19z" fill="#67604f" />
      <circle cx="5" cy="18" r="5" fill="#1f2a33" />
      <circle cx="4" cy="16" r="2" fill="#cfd6dc" />
      <circle cx="14" cy="15" r="4" fill="#eee" />
      <circle cx="22" cy="15" r="5" fill="#fff" />
      <circle cx="14" cy="15" r="1.8" fill="#111" />
      <circle cx="22" cy="15" r="2.2" fill="#111" />
      <path d="M26 22l12 9" stroke="#ea9a3e" strokeWidth="3" />
      <path d="M36 28c5 0 8 4 10 10-6-1-10-3-12-7z" fill="#0c0c0c" stroke="#555" strokeWidth=".7" />
      <path d="M12 26c5 3 10 3 15-1" stroke="#2d2a22" strokeWidth="1.5" />
    </Big>
  ),
  Files: (
    <Big>
      <path d="M2 7a3 3 0 0 1 3-3h14l4 4h20a3 3 0 0 1 3 3v9H2z" fill="#a83248" />
      <path d="M23 8h20a3 3 0 0 1 3 3v6H20z" fill="#e2562c" />
      <path d="M5 12h38a3 3 0 0 1 3 3v26a3 3 0 0 1-3 3H5a3 3 0 0 1-3-3V15a3 3 0 0 1 3-3z" fill="#a6a6a6" />
      <path d="M19 21.5h10" stroke="#fff" strokeWidth="3" strokeLinecap="round" />
    </Big>
  ),
  Terminal: (
    <Big>
      <rect x="2.5" y="6.5" width="43" height="35" rx="4" fill="#4c4c4c" stroke="#666" />
      <path d="M8 11.5l6 3-6 3M16 21h7" stroke="#fff" strokeWidth="1.6" />
    </Big>
  ),
  "Ubuntu Software": (
    <Big>
      <rect x="2" y="6" width="44" height="37" rx="4" fill="#f2692f" />
      <path d="M17 9c0-10 14-10 14 0" stroke="#e9cf9b" strokeWidth="2" />
      <path d="M16 36L22.5 15h3L32 36" stroke="#fff" strokeWidth="4.5" />
      <path d="M12 29.5h24" stroke="#fff" strokeWidth="4" strokeLinecap="round" />
    </Big>
  ),
  Help: (
    <Big>
      <circle cx="24" cy="24" r="22" fill="#2a93dd" />
      <path d="M18.5 15.5c5-4.5 12.5-2.5 12.5 3 0 5-7 5.5-7 12" stroke="#fff" strokeWidth="3" />
      <circle cx="24" cy="36" r="2.2" fill="#fff" />
    </Big>
  ),
  Trash: (
    <Big>
      <rect x="6.5" y="2" width="35" height="44" rx="4" fill="#c9c9c9" />
      <rect x="9" y="4.5" width="30" height="6" rx="3" fill="#7b7b7b" />
      <g stroke="#278c20" strokeWidth="3.5">
        <path d="M19.5 27l2.5-4.5h4l2 3.5" />
        <path d="M29.5 29l2 4-1.5 2.5h-4" />
        <path d="M22 35.5h-3.5l-1.5-3 1.5-3" />
      </g>
      <path d="M25.5 26.5H31l-1-5zM26.5 32.5v6L23 35.5zM15 30l5.5-2 1 5z" fill="#278c20" />
    </Big>
  )
};

const AppGridIcon = () => (
  <svg width="30" height="30" viewBox="0 0 30 30" aria-hidden="true">
    {[0, 12, 24].map(y =>
      [0, 12, 24].map(x => <rect key={`${x}-${y}`} x={x} y={y} width="6" height="6" rx="1.5" fill="#fff" />)
    )}
  </svg>
);

const InfoIcon = () => (
  <Glyph size={30} box={30}>
    <circle cx="15" cy="15" r="14" fill="#2a8dd8" stroke="#2a6b96" />
    <path d="M2 15.5h26a13 13 0 0 1-26 0z" fill="#43a5e6" />
    <circle cx="15" cy="7" r="2" fill="#fff" />
    <path d="M15 11v13" stroke="#fff" strokeWidth="3.5" />
  </Glyph>
);

/* ---------- data ---------- */

const menuTitles = ["File", "Edit", "View", "Insert", "Format", "Styles", "Sheet", "Data", "Tools", "Window", "Help"];

const dataMenu = [
  [{ label: "Sort..." }, { label: "Sort Ascending" }, { label: "Sort Descending" }],
  [{ label: "AutoFilter", shortcut: "Shift+Ctrl+L" }, { label: "More Filters", sub: true }],
  [{ label: "Define Range..." }, { label: "Select Range..." }, { label: "Refresh Range", disabled: true }],
  [{ label: "Pivot Table", sub: true }],
  [{ label: "Calculate", sub: true }, { label: "Validity..." }, { label: "Subtotals..." }, { label: "Form..." }],
  [{ label: "Streams...", disabled: true }, { label: "XML Source..." }],
  [
    { label: "Multiple Operations..." },
    { label: "Text to Columns...", disabled: true },
    { label: "Consolidate..." },
    { label: "Group and Outline", sub: true },
    { label: "Statistics", sub: true }
  ]
];

const lucide = Icon => <Icon size={20} strokeWidth={1.5} />;

// "|" is a rule, [icon, label, options] is a button
const standardTools = [
  ["newSheet", "New", { caret: true }],
  ["open", "Open", { caret: true }],
  ["save", "Save", { caret: true }],
  "|",
  ["pdf", "Export as PDF"],
  ["print", "Print"],
  ["preview", "Print Preview"],
  "|",
  ["cut", "Cut"],
  ["copy", "Copy"],
  ["paste", "Paste", { caret: true, muted: true }],
  "|",
  [lucide(Paintbrush), "Clone Formatting"],
  [lucide(Eraser), "Clear Formatting"],
  "|",
  [lucide(Undo2), "Undo", { caret: true }],
  [lucide(Redo2), "Redo", { caret: true }],
  "|",
  [lucide(Search), "Find and Replace"],
  "|",
  [lucide(SpellCheck), "Spelling"],
  [lucide(Rows3), "Row", { caret: true }],
  ["column", "Column", { caret: true }],
  "|",
  ["sort", "Sort"],
  ["sortAsc", "Sort Ascending"],
  ["sortDesc", "Sort Descending"],
  ["filter", "AutoFilter"],
  "|",
  ["image", "Insert Image"],
  ["chart", "Insert Chart"],
  ["pivot", "Insert Pivot Table"],
  "|",
  ["omega", "Special Character", { caret: true }],
  ["link", "Insert Hyperlink"],
  ["comment", "Insert Comment"],
  ["header", "Headers and Footers"],
  "|",
  ["printArea", "Define Print Area"],
  ["freeze", "Freeze Rows and Columns", { caret: true }],
  ["split", "Split Window"],
  "|",
  ["brush", "Show Draw Functions"]
];

const formatTools = [
  "|",
  ["bold", "Bold"],
  [lucide(Italic), "Italic"],
  [lucide(Underline), "Underline", { caret: true }],
  "|",
  [lucide(Type), "Font Color", { caret: true }],
  [lucide(Highlighter), "Highlighting", { caret: true }],
  "|",
  [lucide(AlignLeft), "Align Left"],
  [lucide(AlignCenter), "Align Center"],
  [lucide(AlignRight), "Align Right"],
  "|",
  ["alignTop", "Align Top"],
  ["alignMiddle", "Center Vertically"],
  ["alignBottom", "Align Bottom", { pressed: true }],
  "|",
  ["wrap", "Wrap Text"],
  "|",
  ["merge", "Merge and Center Cells"],
  ["merge", "Merge Cells"],
  ["unmerge", "Unmerge Cells"],
  "|",
  ["currency", "Format as Currency", { caret: true }],
  ["percent", "Format as Percent"],
  ["number", "Format as Number"],
  ["date", "Format as Date"],
  "|",
  ["addDecimal", "Add Decimal Place"],
  ["removeDecimal", "Delete Decimal Place"],
  "|",
  ["indent", "Increase Indent"],
  ["outdent", "Decrease Indent"],
  "|",
  ["border", "Borders", { caret: true }],
  ["borderStyle", "Border Style", { caret: true }],
  ["background", "Background Color", { caret: true }],
  "|",
  ["conditional", "Conditional", { caret: true }]
];

const columns = "ABCDEFGHIJKLMNOPQRS".split("");

const students = [
  ["Tom Softy", "--"],
  ["John Badman", "1"],
  ["Kanye East", "3"],
  ["Reese Withoutaspo", "95", true],
  ["Swan Ronson", "89"],
  ["50 Dollar Dollar", "54"],
  ["Jonah Mountain", "65"],
  ["Jeff Tunnels", "38"],
  ["Keira Daily", "40"],
  ["Morgan Prisoner", "76"],
  ["Emma Stoned", "1"],
  ["Leonardo DiThario", "--"],
  ["Tom Drive", "--"],
  ["Selena Stopmez", "18"],
  ["Demi Tomato", "46"],
  ["Lady Haha", "74"],
  ["Angelina Sad", "67"],
  ["Ellen Degreedy", "11"],
  ["Roger Lesse", "74"],
  ["Jim Doesntcarrey", "34"]
];

const FIRST_ROW = 10;
const LAST_ROW = 44;
const SELECTION_END = 29;
const rows = Array.from({ length: LAST_ROW - FIRST_ROW + 1 }, (_, i) => FIRST_ROW + i);

const gradeFill = mark => {
  if (mark === undefined || mark === "--") return null;
  return Number(mark) >= 40 ? "pass" : "fail";
};

/* ---------- parts ---------- */

const Tools = ({ items }) =>
  items.map((item, i) => {
    if (item === "|") return <Rule key={i} />;
    const [icon, label, options = {}] = item;
    return (
      <React.Fragment key={i}>
        <ToolButton aria-label={label} $pressed={options.pressed} $dropdown={options.caret}>
          {typeof icon === "string" ? <Glyph>{icons[icon]}</Glyph> : icon}
        </ToolButton>
        {options.caret && (
          <CaretButton aria-label={`${label} options`}>
            <Caret muted={options.muted} />
          </CaretButton>
        )}
      </React.Fragment>
    );
  });

const ComboBox = ({ label, value, width, after, italic }) => (
  <Combo $width={width} $after={after} $italic={italic}>
    <input aria-label={label} defaultValue={value} />
    <button aria-label={`${label} list`}>
      <Chevron />
    </button>
  </Combo>
);

const DataMenu = () => (
  <Popup role="menu">
    {dataMenu.map((group, i) => (
      <MenuGroup key={i}>
        {group.map(({ label, shortcut, sub, disabled }) => (
          <MenuEntry key={label} role="menuitem" disabled={disabled}>
            <span>{label}</span>
            {shortcut && <Shortcut>{shortcut}</Shortcut>}
            {sub && <SubmenuArrow />}
          </MenuEntry>
        ))}
      </MenuGroup>
    ))}
  </Popup>
);

const SheetRow = ({ row }) => {
  const [name, mark, overflow] = students[row - FIRST_ROW] || [];
  const selected = row <= SELECTION_END;
  return (
    <tr>
      <HeadCell scope="row" $selected={selected}>
        {row < LAST_ROW ? row : null}
      </HeadCell>
      {columns.map(col => (
        <Cell
          key={col}
          $styled={selected && (col === "B" || col === "C")}
          $fill={col === "C" ? gradeFill(mark) : null}
          $beforeSelection={selected && col === "C"}
          $selected={selected && col === "D"}
          $last={row === SELECTION_END}
        >
          {col === "B" && name}
          {col === "C" && mark}
          {col === "B" && overflow && (
            <OverflowMark width="4" height="8" viewBox="0 0 4 8">
              <path d="M0 0l4 4-4 4z" fill="#000" />
              <path d="M1 3h2v2H1z" fill="#e02020" />
            </OverflowMark>
          )}
          {col === "D" && row === SELECTION_END && <FillHandle />}
        </Cell>
      ))}
    </tr>
  );
};

const Info = ({ text, action }) => (
  <InfoBar>
    <InfoIcon />
    <InfoText>{text}</InfoText>
    <InfoButton>{action}</InfoButton>
    <InfoClose aria-label="Close Infobar">
      <Cross size={18} stroke="#0a4f8f" width={1.2} />
    </InfoClose>
  </InfoBar>
);

const TopPanel = () => (
  <TopBar>
    <TopGroup $gap={43}>
      <span>Activities</span>
      <AppName>
        <svg width="12" height="14" viewBox="0 0 12 14" aria-hidden="true">
          <path d="M1 0h8l3 3v10a1 1 0 0 1-1 1H1a1 1 0 0 1-1-1V1a1 1 0 0 1 1-1z" fill="#ddd" />
          <path d="M2.5 4.5h7v6h-7zM2.5 6.5h7M2.5 8.5h7M6 4.5v6" stroke="#222" fill="none" />
        </svg>
        <span>LibreOffice Calc</span>
      </AppName>
    </TopGroup>
    <Clock $gap={18}>
      <span>{"Apr 21  22:04"}</span>
      <svg width="14" height="16" viewBox="0 0 14 16" fill="none" stroke="#f2f2f2" aria-hidden="true">
        <path d="M2 12.5h10M3.5 12V6.5C3.5 4 5 2.5 7 2.5s3.5 1.5 3.5 4V12M1 6c0-2.5 1-4 2.5-5M13 6c0-2.5-1-4-2.5-5" />
        <path d="M5.5 14h3L7 15.5z" fill="#f2f2f2" />
      </svg>
    </Clock>
    <TopGroup $gap={13} $align="flex-end">
      <svg width="15" height="14" viewBox="0 0 15 14" fill="none" stroke="#f2f2f2" aria-hidden="true">
        <path d="M0 4.5h3l4-4v13l-4-4H0z" fill="#f2f2f2" stroke="none" />
        <path d="M9 4.5c1.5 1.5 1.5 3.5 0 5M11 2.5c3 2.5 3 6.5 0 9" />
      </svg>
      <svg width="14" height="14" viewBox="0 0 14 14" fill="none" stroke="#f2f2f2" strokeWidth="1.3" aria-hidden="true">
        <path d="M7 0v7M4 2a6 6 0 1 0 6 0" />
      </svg>
    </TopGroup>
  </TopBar>
);

const DockPanel = () => (
  <Dock aria-label="Dock">
    {Object.keys(dockArt)
      .filter(name => name !== "Trash")
      .map(name => (
        <DockButton key={name} aria-label={name} $active={name === "Calc"}>
          {dockArt[name]}
        </DockButton>
      ))}
    <DockRule />
    <DockButton aria-label="Trash">{dockArt.Trash}</DockButton>
    <DockSpacer />
    <DockButton aria-label="Show Applications">
      <AppGridIcon />
    </DockButton>
  </Dock>
);

const SidebarPanel = () => (
  <Sidebar>
    <SideButton aria-label="Sidebar Settings">
      <Glyph size={10} box={10}>
        <path d="M0 .5h10M0 5h10M0 9.5h10" stroke="#333" />
      </Glyph>
    </SideButton>
    <SideButton aria-label="Properties" $active>
      <Glyph size={16} box={16}>
        <rect width="16" height="7" rx="3.5" fill={color.orange} />
        <rect y="9" width="16" height="7" rx="3.5" fill={color.orange} />
        <circle cx="12.5" cy="3.5" r="2.5" fill="#fff" />
        <circle cx="3.5" cy="12.5" r="2.5" fill="#fff" />
      </Glyph>
    </SideButton>
    <SideButton aria-label="Styles">
      <Glyph>
        <path d="M13 13l3.5-10H19l3 10M14 10h7" stroke="#222" strokeWidth="2.2" />
        <path d="M3.5 9.5l3-1.5 9-.5 1.5 3-6 7-4-1-1-3z" fill="#fff" stroke={color.ink} />
        <path d="M9 9.5l3 3" stroke={color.ink} />
        <path d="M6.5 16.5L2 21.5" stroke="#f48f7d" strokeWidth="3" />
      </Glyph>
    </SideButton>
    <SideButton aria-label="Gallery">
      <Glyph>
        <rect x="2.5" y="3.5" width="16" height="13" rx="1" fill="#dd5ccd" stroke="#333" />
        <rect x="5.5" y="7.5" width="16" height="13" rx="1" fill="#dd5ccd" stroke="#333" />
        <path d="M9 18l2-4 2 2 1.5-3 3 5z" fill="#fff" />
        <path d="M16 11h2v2h-2z" fill="#fff" />
      </Glyph>
    </SideButton>
    <SideButton aria-label="Navigator">
      <Glyph>
        <circle cx="12" cy="12" r="9.5" fill="#4a79e8" stroke="#444" />
        <path d="M17 7l-3.5 8L7 17l3-6.5z" fill="#fff" />
        <path d="M17 7l-5.5 3 3 2.5z" fill="#e2334a" />
      </Glyph>
    </SideButton>
    <SideButton aria-label="Functions">
      <Glyph>
        <path d="M12.5 3.5c-4-1-4.5.5-4.5 3V20M4.5 9.5H12" stroke="#222" strokeWidth="2.2" />
        <path d="M15 14l6 6M21 14l-6 6" stroke="#222" strokeWidth="2" />
      </Glyph>
    </SideButton>
    <SideGrip aria-label="Hide sidebar">
      <svg width="5" height="8" viewBox="0 0 5 8" aria-hidden="true">
        <path d="M0 0l5 4-5 4z" fill="#f5f5f5" />
      </svg>
    </SideGrip>
  </Sidebar>
);

const Status = () => (
  <StatusBar>
    <StatusCell $size={250} $pad={10}>
      Sheet 1 of 1
    </StatusCell>
    <StatusCell $size={343} $pad={8}>
      Selected: 28 rows, 1 column
    </StatusCell>
    <StatusCell $size={291} $pad={8}>
      PageStyle_Sheet1
    </StatusCell>
    <StatusCell $size={300} $center>
      English (Hong Kong)
    </StatusCell>
    <StatusCell $size={68} $fixed />
    <StatusCell $size={29} $fixed $center>
      <svg width="18" height="10" viewBox="0 0 18 10" fill="none" aria-hidden="true">
        <path d="M.5 2.5h8v5h-8z" stroke={color.orange} />
        <path d="M12 .5h5M12 9.5h5M14.5 1v8" stroke="#222" />
      </svg>
    </StatusCell>
    <StatusCell $size={29} $fixed $center>
      <svg width="10" height="11" viewBox="0 0 10 11" aria-hidden="true">
        <path d="M3 .5h4v4h2L5 9 1 4.5h2z" fill="#8ccf3c" stroke="#3a3a3a" />
        <path d="M1 10.5h8" stroke="#3a3a3a" />
      </svg>
    </StatusCell>
    <StatusCell $size={29} $fixed />
    <StatusCell $size={293} $center>
      Average: ; Sum: 0
    </StatusCell>
    <StatusCell $size={143} $fixed $pad={5}>
      <ZoomButton aria-label="Zoom Out">
        <svg width="9" height="9" viewBox="0 0 9 9">
          <path d="M0 4.5h9" stroke="#555" strokeWidth="2" />
        </svg>
      </ZoomButton>
      <ZoomSlider type="range" aria-label="Zoom" defaultValue="50" />
      <ZoomButton aria-label="Zoom In">
        <svg width="9" height="9" viewBox="0 0 9 9">
          <path d="M0 4.5h9M4.5 0v9" stroke="#555" strokeWidth="2" />
        </svg>
      </ZoomButton>
    </StatusCell>
    <StatusCell $size={48} $fixed $pad={8} $end>
      100%
    </StatusCell>
  </StatusBar>
);

const App = () => (
  <>
    <GlobalStyle />
    <Screen>
      <TopPanel />
      <Body>
        <DockPanel />
        <Window>
          <TitleBar>
            <Title>Order_Id_Mark_Pass_Fail.xlsx - LibreOffice Calc</Title>
            <WindowControls>
              <RoundButton aria-label="Minimize">
                <Glyph size={8} box={8}>
                  <path d="M0 6.5h8" stroke="#3d3d3d" />
                </Glyph>
              </RoundButton>
              <RoundButton aria-label="Restore">
                <Glyph size={8} box={8}>
                  <path d="M.5 2.5h5v5h-5z" stroke="#3d3d3d" />
                  <path d="M2.5 .5h5v5" stroke="#8a8a8a" />
                </Glyph>
              </RoundButton>
              <RoundButton aria-label="Close">
                <Cross />
              </RoundButton>
            </WindowControls>
          </TitleBar>

          <MenuBar>
            <MenuList>
              {menuTitles.map(title => (
                <MenuSlot key={title}>
                  <MenuTitle $open={title === "Data"}>{title}</MenuTitle>
                  {title === "Data" && (
                    <>
                      <DataMenu />
                      <Pointer width="18" height="26" viewBox="0 0 18 26">
                        <path d="M1.5 1.5v19l4.5-4 3 7 4-2-3-6.5h6z" fill="#222" stroke="#fff" strokeWidth="1.3" />
                      </Pointer>
                    </>
                  )}
                </MenuSlot>
              ))}
            </MenuList>
            <CloseDocument aria-label="Close Document">
              <Cross />
            </CloseDocument>
          </MenuBar>

          <Toolbar $height={38}>
            <Tools items={standardTools} />
          </Toolbar>
          <Toolbar $height={39}>
            <ComboBox label="Font Name" value="Söhne" width={221} after={8} italic />
            <ComboBox label="Font Size" value="11 pt" width={101} />
            <Tools items={formatTools} />
          </Toolbar>

          <Workspace>
            <Document>
              <Toolbar $height={40}>
                <ComboBox label="Name Box" value="D2:D29" width={173} />
                <Rule />
                <FormulaButton aria-label="Function Wizard">
                  <Glyph size={14} box={14}>
                    <path d="M8 1.5C5 1 4 1.5 4 4v9M1.5 5.5H7" stroke="#222" strokeWidth="2" />
                    <path d="M9 9l4 4M13 9l-4 4" stroke="#444" />
                  </Glyph>
                </FormulaButton>
                <FormulaButton aria-label="Select Function">
                  <Glyph size={13} box={13}>
                    <path d="M11.5 3.5V1.5H2.5l4 5-4 5h9v-2" stroke="#222" strokeWidth="2" />
                  </Glyph>
                </FormulaButton>
                <CaretButton aria-label="Functions list">
                  <Caret />
                </CaretButton>
                <FormulaButton aria-label="Formula" $width={28}>
                  <svg width="12" height="8" viewBox="0 0 12 8">
                    <path d="M0 1h12M0 7h12" stroke="#222" strokeWidth="1.5" />
                  </svg>
                </FormulaButton>
                <FormulaInput aria-label="Input line" />
                <FormulaButton aria-label="Expand Formula Bar" $width={18}>
                  <Chevron />
                </FormulaButton>
              </Toolbar>
              <Info text="Help us make LibreOffice even better!" action="Get involved" />
              <Info text="Your donations support our worldwide community." action="Donate" />

              <GridArea>
                <SheetView>
                  <Sheet>
                    <colgroup>
                      <col width="41" />
                      {columns.map(col => (
                        <col key={col} width={col === "B" ? 153 : 90} />
                      ))}
                    </colgroup>
                    <thead>
                      <tr>
                        <HeadCell as="td" $top />
                        {columns.map(col => (
                          <HeadCell key={col} scope="col" aria-label={`Column ${col}`} $top $selected={col === "D"}>
                            {col === "D" ? null : col}
                          </HeadCell>
                        ))}
                      </tr>
                    </thead>
                    <tbody>
                      {rows.map(row => (
                        <SheetRow key={row} row={row} />
                      ))}
                    </tbody>
                  </Sheet>
                </SheetView>
                <VerticalTrack>
                  <SplitHandle />
                  <VerticalRun>
                    <Thumb />
                  </VerticalRun>
                </VerticalTrack>
              </GridArea>

              <HorizontalTrack>
                <HorizontalThumb />
                <SplitHandle $vertical />
              </HorizontalTrack>
              <TabBar>
                <TabNav aria-label="First Sheet">
                  <Glyph size={16} box={16}>
                    <path d="M.5 2v12M4 8h12" stroke="#f79e80" strokeWidth="1.5" />
                    <path d="M7 4.5v7L2 8z" fill="#f79e80" />
                  </Glyph>
                </TabNav>
                <TabNav aria-label="Previous Sheet">
                  <Glyph size={16} box={16}>
                    <path d="M1 4v8" stroke="#999" />
                    <path d="M9 4v8L2 8zM16 4v8L9 8z" fill="#999" />
                  </Glyph>
                </TabNav>
                <TabNav aria-label="Next Sheet">
                  <Glyph size={16} box={16}>
                    <path d="M15 4v8" stroke="#999" />
                    <path d="M7 4v8l7-4zM0 4v8l7-4z" fill="#999" />
                  </Glyph>
                </TabNav>
                <TabNav aria-label="Last Sheet">
                  <Glyph size={16} box={16}>
                    <path d="M15.5 2v12M0 8h12" stroke="#f79e80" strokeWidth="1.5" />
                    <path d="M9 4.5v7L14 8z" fill="#f79e80" />
                  </Glyph>
                </TabNav>
                <NewSheet aria-label="Add Sheet">
                  <Glyph size={16} box={16}>
                    <path d="M14.5 9V4.5l-4-4h-8a1 1 0 0 0-1 1v13a1 1 0 0 0 1 1H7" stroke={color.ink} />
                    <circle cx="12" cy="12.5" r="3.5" fill="#2a8a1c" />
                    <path d="M10 12.5h4M12 10.5v4" stroke="#fff" strokeWidth="1.3" />
                  </Glyph>
                </NewSheet>
                <SheetTab>Sheet1</SheetTab>
              </TabBar>
            </Document>
            <SidebarPanel />
          </Workspace>

          <Status />
        </Window>
      </Body>
    </Screen>
  </>
);

export default App;
